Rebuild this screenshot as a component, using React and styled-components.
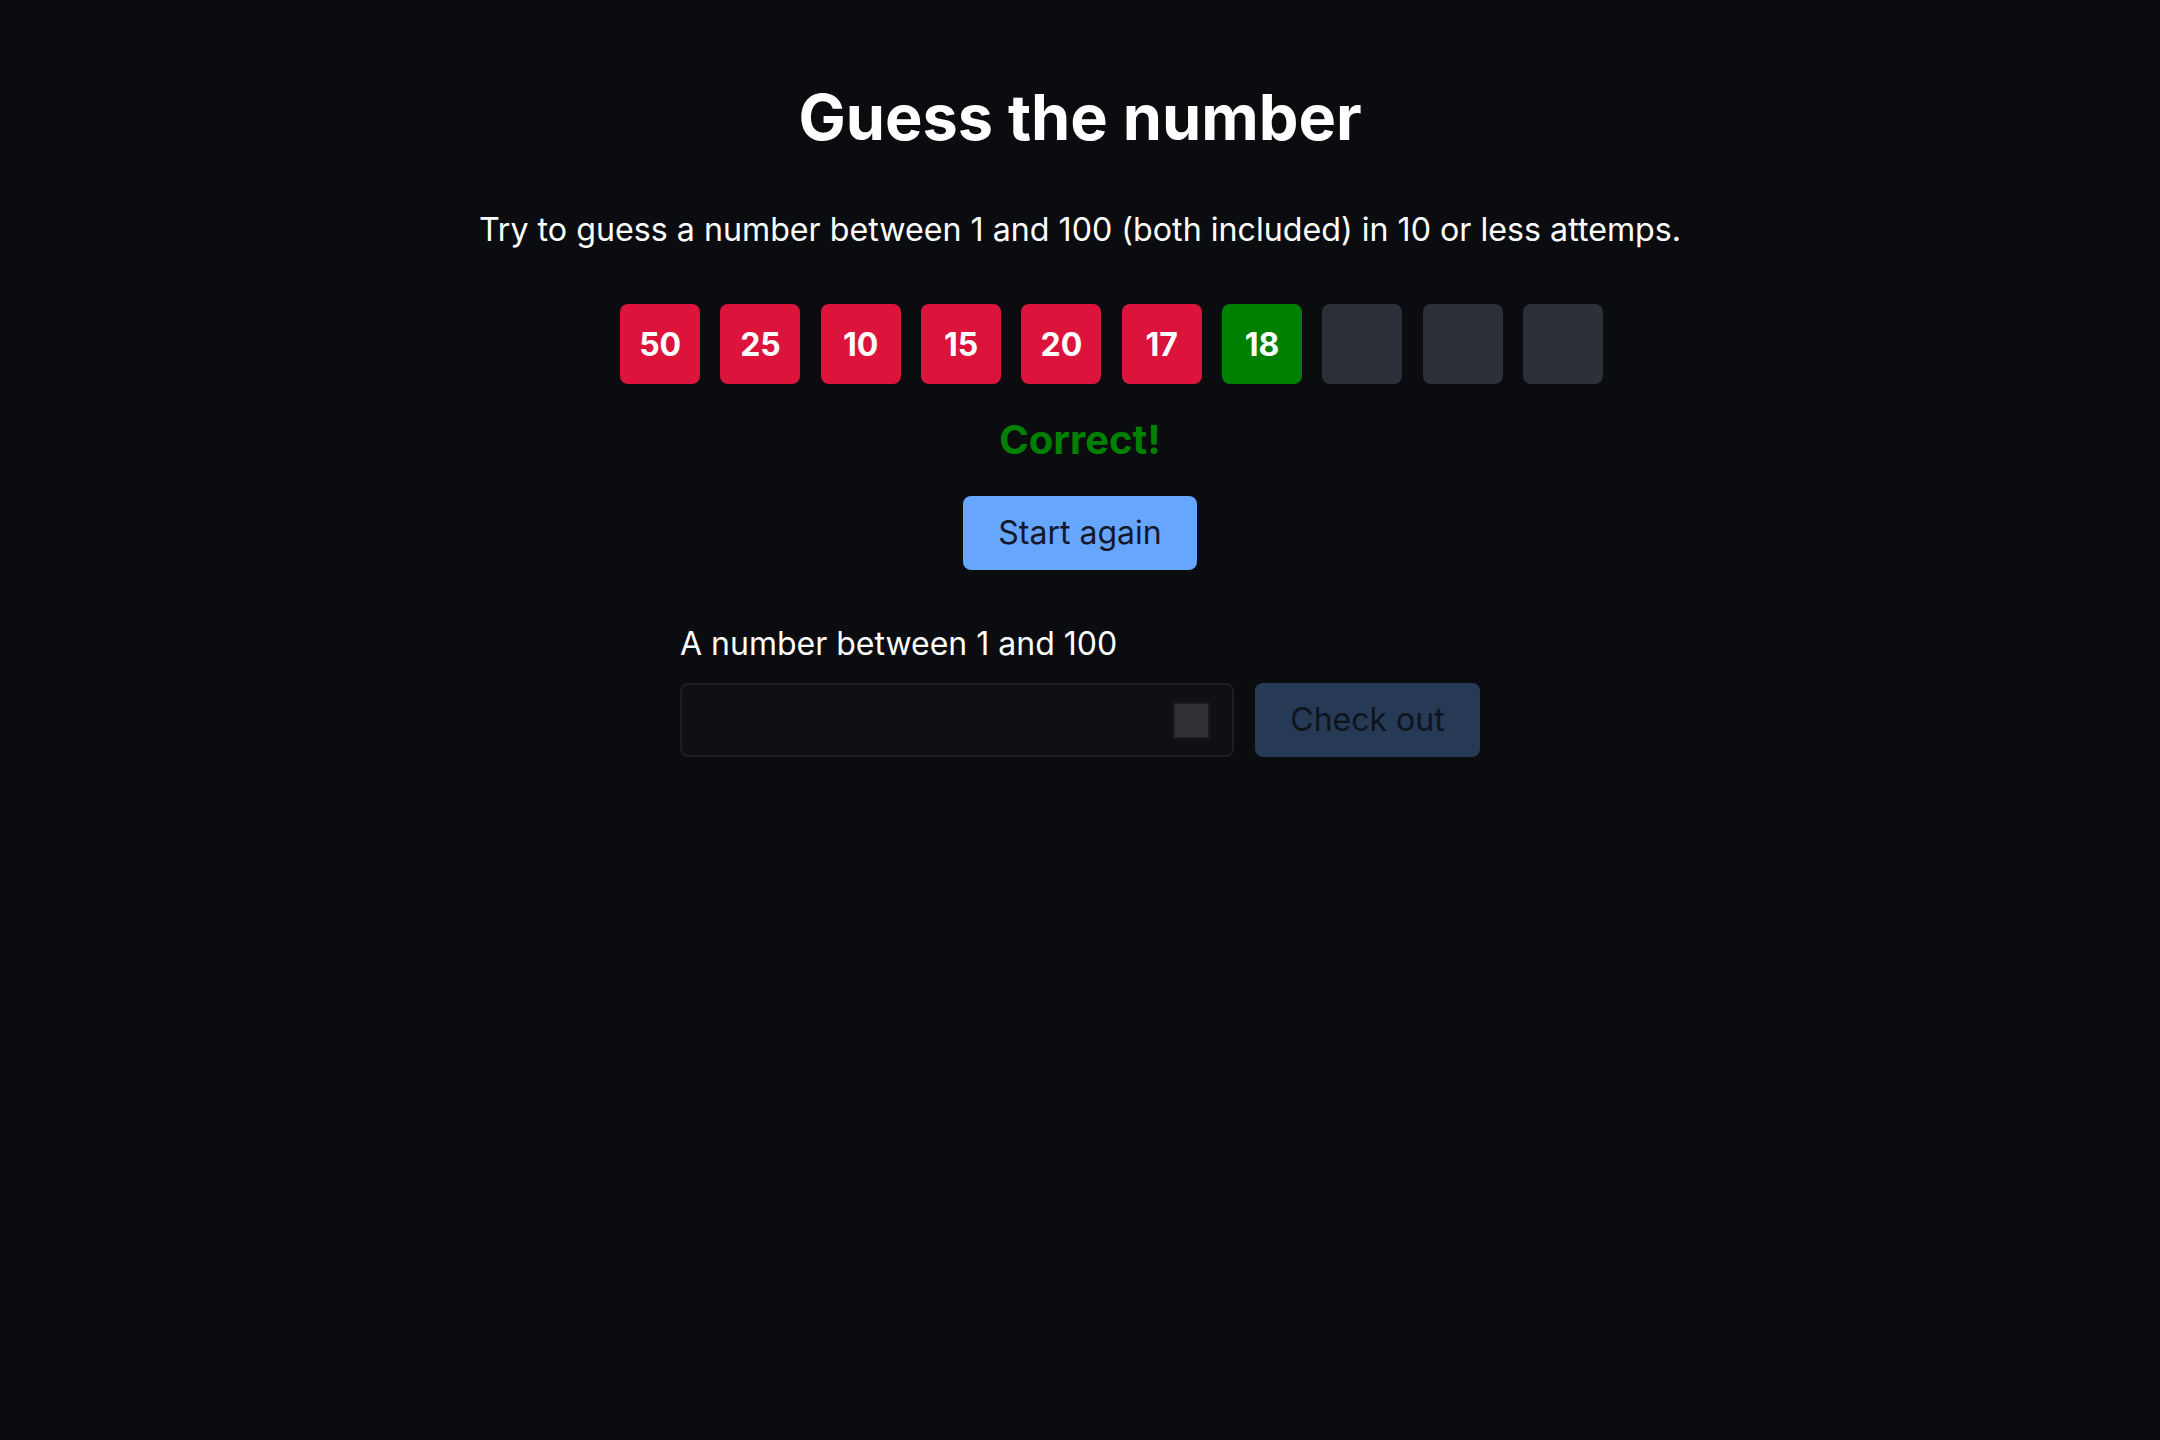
import React, { useState } from "react";
import styled, { createGlobalStyle } from "styled-components";

const GlobalStyle = createGlobalStyle`
  html, body {
    margin: 0;
    padding: 0;
    background: #0a0c0f;
  }
  body {
    font-family: Inter, "Noto Sans", sans-serif;
    color: #ffffff;
  }
`;

const Page = styled.main`
  min-height: 1440px;
  display: flex;
  flex-direction: column;
  align-items: center;
  padding-top: 79px;
  box-sizing: border-box;
`;

const Title = styled.h1`
  margin: 0;
  font-size: 63px;
  line-height: 77px;
  font-weight: 700;
`;

const Intro = styled.p`
  margin: 55px 0 0;
  font-size: 32.2px;
  line-height: 38px;
`;

const Attempts = styled.ul`
  list-style: none;
  margin: 55px 0 0;
  padding: 0 0 0 63px;
  display: flex;
  gap: 20.3px;
`;

const colors = {
  low: "#dc143c",
  high: "#dc143c",
  win: "#008000",
  empty: "#2b3039",
};

const Attempt = styled.li`
  width: 80px;
  height: 80px;
  border-radius: 8px;
  background: ${(p) => colors[p.$state]};
  display: flex;
  align-items: center;
  justify-content: center;
  font-size: 32px;
  font-weight: 700;
  color: #fff;
`;

const Result = styled.p`
  margin: 32px 0 0;
  font-size: 40px;
  line-height: 48px;
  font-weight: 700;
  color: ${(p) => (p.$ok ? "#008000" : "#dc143c")};
`;

const Button = styled.button`
  font-family: inherit;
  font-size: 32px;
  line-height: 38px;
  white-space: nowrap;
  border: none;
  border-radius: 8px;
  padding: 18px 35px;
  cursor: pointer;
  background: ${(p) => (p.$muted ? "#263a56" : "#66a6ff")};
  color: ${(p) => (p.$muted ? "#0f141c" : "#14192a")};
`;

const RestartButton = styled(Button)`
  margin-top: 32px;
`;

const SubmitButton = styled(Button)`
  flex: 1;
  padding: 18px 0;
`;

const Form = styled.form`
  width: 800px;
  margin-top: 55px;
  display: flex;
  flex-direction: column;
  gap: 20px;
`;

const Label = styled.label`
  font-size: 32px;
  line-height: 38px;
`;

const InputRow = styled.div`
  display: flex;
  gap: 21px;
`;

const Field = styled.div`
  flex: 0 0 554px;
  min-width: 0;
  height: 74px;
  box-sizing: border-box;
  border: 2px solid #1c1e23;
  border-radius: 8px;
  background: #0f1014;
  display: flex;
  align-items: center;
  padding: 0 22px 0 24px;
`;

const Input = styled.input`
  flex: 1;
  width: 0;
  min-width: 0;
  padding: 0;
  background: transparent;
  border: none;
  outline: none;
  color: #fff;
  font-family: inherit;
  font-size: 32px;
`;

const Spinner = styled.span`
  flex: none;
  width: 37px;
  height: 37px;
  box-sizing: border-box;
  background: #313236;
  border: 2px solid #1a1b1e;
`;

const guesses = [
  { value: 50, state: "high" },
  { value: 25, state: "high" },
  { value: 10, state: "low" },
  { value: 15, state: "low" },
  { value: 20, state: "high" },
  { value: 17, state: "low" },
  { value: 18, state: "win" },
];

const App = () => {
  const [guess, setGuess] = useState("");
  const slots = [...guesses];
  while (slots.length < 10) slots.push({ value: "", state: "empty" });

  return (
    <Page>
      <GlobalStyle />
      <Title>Guess the number</Title>
      <Intro>
        Try to guess a number between 1 and 100 (both included) in 10 or less
        attemps.
      </Intro>
      <Attempts>
        {slots.map((s, i) => (
          <Attempt key={i} $state={s.state}>
            {s.value}
          </Attempt>
        ))}
      </Attempts>
      <Result $ok>Correct!</Result>
      <RestartButton type="button">Start again</RestartButton>
      <Form onSubmit={(e) => e.preventDefault()}>
        <Label htmlFor="guess">A number between 1 and 100</Label>
        <InputRow>
          <Field>
            <Input
              id="guess"
              type="text"
              value={guess}
              onChange={(e) => setGuess(e.target.value)}
            />
            <Spinner />
          </Field>
          <SubmitButton type="submit" $muted>
            Check out
          </SubmitButton>
        </InputRow>
      </Form>
    </Page>
  );
};

export default App;
